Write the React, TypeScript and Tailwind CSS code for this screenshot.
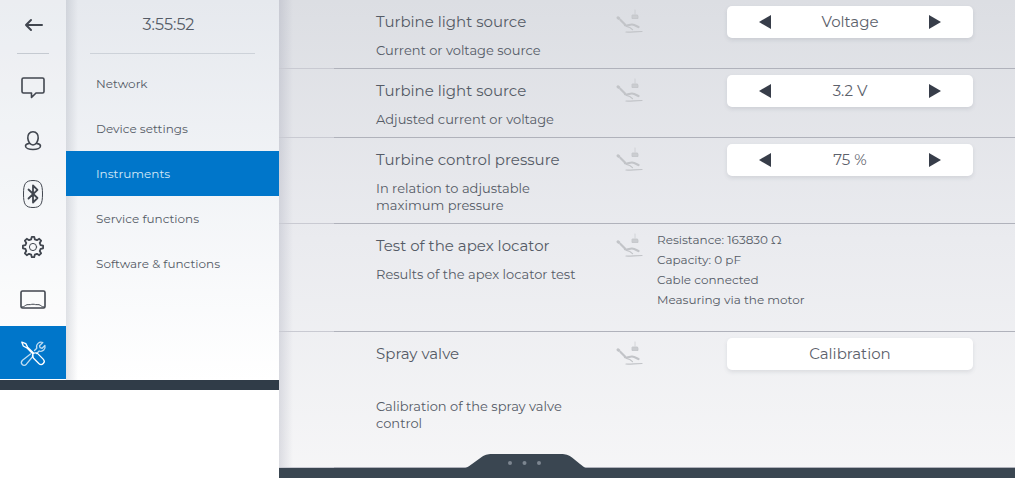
import type { ReactNode } from 'react';

const iconProps = {
  width: 30,
  height: 30,
  viewBox: '0 0 30 30',
  fill: 'none',
  stroke: 'currentColor',
  strokeWidth: 1.6,
  strokeLinecap: 'round' as const,
  strokeLinejoin: 'round' as const,
  'aria-hidden': true,
};

function BackIcon() {
  return (
    <svg {...iconProps} strokeWidth={2}>
      <path d="M24 15H8M13 10l-5 5 5 5" />
    </svg>
  );
}

function MessageIcon() {
  return (
    <svg {...iconProps}>
      <path d="M5.500 5h19q1.500 0 1.500 1.500v12q0 1.500-1.500 1.500h-6.500L13.500 24.500V20H5.500Q4 20 4 18.500v-12Q4 5 5.500 5Z" />
    </svg>
  );
}

function UserIcon() {
  return (
    <svg {...iconProps}>
      <path d="M15 5.800c-3.700 0-5.500 2.900-5.200 6.300.3 3.500 2.300 6.900 5.200 6.900s4.900-3.400 5.200-6.900c.3-3.400-1.500-6.300-5.200-6.300Z" />
      <path d="M11.500 17.400c-2.400.4-4 1.300-4 2.700 0 2 3.400 3.400 7.500 3.400s7.500-1.400 7.500-3.400c0-1.400-1.600-2.300-4-2.700" />
    </svg>
  );
}

function BluetoothIcon() {
  return (
    <svg {...iconProps}>
      <path strokeWidth="1" d="M15 1.500c7.500 0 9.500 3 9.500 13.500S22.500 28.500 15 28.500 5.500 25.500 5.500 15 7.500 1.500 15 1.500Z" />
      <path strokeWidth="1.800" d="M10.500 10.500l9 8.500-4.500 4.500v-17l4.500 4.300-9 8.700" />
    </svg>
  );
}

function GearIcon() {
  return (
    <svg {...iconProps} viewBox="0 1 30 30" strokeWidth={1.8}>
      <path d="M13.800 5.800h2.400l.6 2.500 2.200.9 2.200-1.400 1.900 1.900-1.400 2.200.9 2.200 2.500.6v2.600l-2.500.6-.9 2.200 1.400 2.200-1.900 1.900-2.200-1.400-2.200.9-.6 2.500h-2.400l-.6-2.500-2.200-.9-2.200 1.400-1.900-1.900 1.400-2.200-.9-2.200-2.500-.6v-2.600l2.500-.6.9-2.200-1.400-2.200 1.900-1.900 2.200 1.400 2.200-.9Z" />
      <circle cx="15" cy="16" r="3.600" strokeWidth="1" />
    </svg>
  );
}

function ScreenIcon() {
  return (
    <svg {...iconProps}>
      <rect x="3" y="6" width="24" height="17" rx="1.500" />
      <path strokeWidth="1" d="M4 22c2.500 0 3-1.800 5-2.300 1.500-.3 2.500.2 3.500-.1 1.500-.5 3.500-.5 5 0 1 .3 2-.2 3.500.1 2 .5 2.500 2.300 5 2.300" />
    </svg>
  );
}

function ToolsIcon() {
  return (
    <svg {...iconProps} strokeWidth={1.3}>
      <path
        strokeOpacity=".75"
        d="M12.500 16l-8 6.300c-3 3 .9 6.900 3.900 3.900l6.800-8.200M16.500 12.500l2.300-2.300c-1.200-4 2.500-7 6-5.700L21.500 7.800l.6 1.900 2 .6 2.800-2.800c1 3.700-2.200 6.700-5.700 5.500l-2.600 2.500"
      />
      <path d="M3.800 4.200l4 1.400 1.800 3.500 6.200 6.200c1.500-.8 3-.6 4.200.6l5.200 5.200c3 3.200-1.300 7.300-4.400 4.400l-5.200-5.200c-1.200-1.200-1.400-2.700-.6-4.200L8.800 9.900 5.300 8Z" />
    </svg>
  );
}

function ChairIcon() {
  return (
    <svg width="30" height="28" viewBox="0 0 30 28" fill="none" stroke="#c2c4c8" strokeLinecap="round" strokeLinejoin="round" className="shrink-0" aria-hidden="true">
      <path strokeWidth="1" strokeOpacity=".6" d="M19 2v4" />
      <path strokeWidth="1" fill="#cbcdd1" strokeOpacity=".8" d="M16.500 7h5l.5 1.500v2h-6v-2Z" />
      <path strokeWidth="3" d="M2 9.800l.8.600" />
      <path strokeWidth="2.200" d="M4.500 12l4.500 4.500" />
      <path strokeWidth="2.200" d="M9 17.300c3 1 4.500-1 7-.8s4 1.300 6.500 2.500" />
      <path strokeWidth="1.200" d="M10.500 18.500c2.500.3 4.500 1.500 6 3.200M10 24c5 .3 9-.5 16-.5" />
    </svg>
  );
}

const railItems: { label: string; icon: ReactNode }[] = [
  { label: 'Messages', icon: <MessageIcon /> },
  { label: 'User', icon: <UserIcon /> },
  { label: 'Bluetooth', icon: <BluetoothIcon /> },
  { label: 'Settings', icon: <GearIcon /> },
  { label: 'Display', icon: <ScreenIcon /> },
  { label: 'Service', icon: <ToolsIcon /> },
];

const menuItems = ['Network', 'Device settings', 'Instruments', 'Service functions', 'Software & functions'];

function Stepper({ label, value }: { label: string; value: string }) {
  return (
    <div role="group" aria-label={label} className="ml-auto flex h-8 w-[246px] items-center justify-between rounded-[5px] bg-white px-6 shadow-[0_2px_4px_rgba(60,65,85,0.12)]">
      <button type="button" aria-label="Previous" className="flex h-8 w-7 items-center justify-center">
        <svg width="12" height="14" viewBox="0 0 12 14" fill="#373d49" aria-hidden="true">
          <path d="M12 0v14L0 7Z" />
        </svg>
      </button>
      <span className="text-[15px] leading-5 text-[#5c616b]">{value}</span>
      <button type="button" aria-label="Next" className="flex h-8 w-7 items-center justify-center">
        <svg width="12" height="14" viewBox="0 0 12 14" fill="#373d49" aria-hidden="true">
          <path d="M0 0v14l12-7Z" />
        </svg>
      </button>
    </div>
  );
}

type RowProps = { title: string; note: string; spaced?: boolean; className: string; children: ReactNode };

function SettingRow({ title, note, spaced, className, children }: RowProps) {
  return (
    <section>
      <div className={`flex items-start pr-[42px] pl-[97px] ${className}`}>
        <div className="min-w-0 flex-1 pt-3">
          <h2 className="text-[15px] leading-5">{title}</h2>
          <p className={`max-w-[212px] text-[13px] leading-[17px] ${spaced ? 'mt-[34px]' : 'mt-[10px]'}`}>{note}</p>
        </div>
        <div className="w-[41px] shrink-0 pt-2">
          <ChairIcon />
        </div>
        <div className="w-[316px] shrink-0 pt-[6px]">{children}</div>
      </div>
      <div className="flex h-px">
        <div className="w-[55px] bg-[#c9cad2]" />
        <div className="flex-1 bg-[#b0b2bb]" />
      </div>
    </section>
  );
}

export default function App() {
  return (
    <div className="flex min-h-screen items-stretch bg-white font-['Montserrat','Inter',sans-serif] text-[#555b66]">
      <aside className="w-[279px] shrink-0 self-start">
        <div className="flex bg-linear-to-b from-[#e6e9ee] via-[#f2f4f7] to-white">
          <nav aria-label="Main" className="flex w-[66px] shrink-0 flex-col items-center bg-white/20 pb-px text-[#41464f]">
            <button type="button" aria-label="Back" className="flex h-[53px] w-full items-center justify-center pb-[3px]">
              <BackIcon />
            </button>
            <div className="h-px w-8 bg-[#c5cad1]" />
            <div className="flex w-full flex-col pt-[7px]">
              {railItems.map((item) => (
                <button
                  key={item.label}
                  type="button"
                  aria-label={item.label}
                  className={`flex h-[53px] items-center justify-center ${item.label === 'Service' ? 'bg-[#0076ca] text-white' : ''}`}
                >
                  {item.icon}
                </button>
              ))}
            </div>
          </nav>
          <div className="flex-1 bg-linear-to-r from-[#8d93a0]/25 to-transparent to-[12px]">
            <div className="px-6">
              <div className="flex h-[53px] items-center justify-center pr-2 pb-[3px] text-base">3:55:52</div>
              <div className="h-px bg-[#cdd2d9]" />
            </div>
            <ul className="pt-[7px]">
              {menuItems.map((item) => (
                <li key={item}>
                  <a
                    href="#"
                    className={`flex h-[45px] items-center pl-[30px] text-xs ${item === 'Instruments' ? 'bg-[#0076ca] text-[#d3e8f7]' : ''}`}
                  >
                    {item}
                  </a>
                </li>
              ))}
            </ul>
          </div>
        </div>
        <div className="h-[10px] bg-[#303c48]" />
      </aside>

      <main className="relative flex min-w-0 flex-1 flex-col bg-linear-to-b from-[#dcdee3] via-[#eaebef] to-[#f6f6f7]">
        <div className="flex-1 bg-linear-to-r from-[#8d90a4]/25 to-transparent to-[14px]">
          <SettingRow title="Turbine light source" note="Current or voltage source" className="h-[68px]">
            <Stepper label="Light source type" value="Voltage" />
          </SettingRow>
          <SettingRow title="Turbine light source" note="Adjusted current or voltage" className="h-[68px]">
            <Stepper label="Light source voltage" value="3.2 V" />
          </SettingRow>
          <SettingRow title="Turbine control pressure" note="In relation to adjustable maximum pressure" className="h-[85px]">
            <Stepper label="Control pressure" value="75 %" />
          </SettingRow>
          <SettingRow title="Test of the apex locator" note="Results of the apex locator test" className="h-[107px]">
            <div className="text-xs leading-5">
              <p>Resistance: 163830 Ω</p>
              <p>Capacity: 0 pF</p>
              <p>Cable connected</p>
              <p>Measuring via the motor</p>
            </div>
          </SettingRow>
          <SettingRow title="Spray valve" note="Calibration of the spray valve control" spaced className="h-[135px]">
            <button type="button" className="ml-auto flex h-8 w-[246px] items-center justify-center rounded-[5px] bg-white text-[15px] text-[#5c616b] shadow-[0_2px_4px_rgba(60,65,85,0.12)]">
              Calibration
            </button>
          </SettingRow>
        </div>
        <div className="h-[10px] bg-[#3a4651]" />
        <button type="button" aria-label="Open panel" className="absolute bottom-[9px] left-[181px]">
          <svg width="130" height="15" viewBox="0 0 130 15" aria-hidden="true" className="block">
            <path fill="#3a4651" d="M0 15c6-.5 8-2 12-5l9-6.500C25 .8 27 0 32 0h69c5 0 7 .8 11 3.500l8 6.500c4 3 5 4.500 10 5Z" />
            <g fill="#7c8690">
              <circle cx="50" cy="9" r="2" />
              <circle cx="64.500" cy="9" r="2" />
              <circle cx="79" cy="9" r="2" />
            </g>
          </svg>
        </button>
      </main>
    </div>
  );
}
